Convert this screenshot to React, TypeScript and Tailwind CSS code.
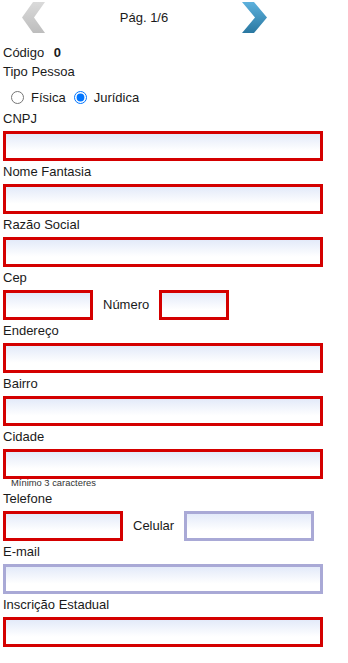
import React from "react";

const RED = "border-[#d40000]";
const LAV = "border-[#a9a9d6]";
const inputBase =
  "block h-[30px] border-[3px] bg-[linear-gradient(to_bottom,#e3eaf9,#ffffff_70%)] outline-none";

function Field({ label, border = RED, last = false }: { label: string; border?: string; last?: boolean }) {
  return (
    <div className={last ? "" : "mb-[3px]"}>
      <div className="h-[15px] leading-[15px] mb-[5px]">{label}</div>
      <input type="text" className={`${inputBase} ${border} w-[320px]`} />
    </div>
  );
}

function LeftArrow() {
  return (
    <svg width="24" height="33" viewBox="0 0 24 33" className="ml-[22px]">
      <defs>
        <linearGradient id="lg" x1="0" y1="0" x2="0" y2="1">
          <stop offset="0" stopColor="#dadada" />
          <stop offset="1" stopColor="#bdbdbd" />
        </linearGradient>
      </defs>
      <polygon points="11,1 23,1 12,16.5 23,32 11,32 0,16.5" fill="url(#lg)" />
    </svg>
  );
}

function RightArrow() {
  return (
    <svg width="26" height="33" viewBox="0 0 26 33">
      <defs>
        <linearGradient id="rg" x1="0" y1="0" x2="0" y2="1">
          <stop offset="0" stopColor="#5db1dd" />
          <stop offset="1" stopColor="#2a78a1" />
        </linearGradient>
      </defs>
      <polygon points="0,1 12,1 25,16.5 12,32 0,32 13,16.5" fill="url(#rg)" />
    </svg>
  );
}

export default function App() {
  return (
    <div
      className="w-[348px] h-[663px] bg-white text-[13px] text-[#1a1a1a] overflow-hidden"
      style={{ fontFamily: '"Liberation Sans", Arial, sans-serif' }}
    >
      {/* paginação */}
      <div className="flex items-center h-[35px]">
        <LeftArrow />
        <span className="w-[196px] text-center">Pág. 1/6</span>
        <RightArrow />
      </div>

      <div className="pl-[3px]">
        <div className="mt-[10px] h-[15px] leading-[15px]">
          Código <span className="ml-[6px] font-bold">0</span>
        </div>
        <div className="mt-[4px] h-[15px] leading-[15px]">Tipo Pessoa</div>

        <div className="mt-[10px] h-[17px] flex items-center">
          <input type="radio" name="tp" className="ml-[8px] w-[13px] h-[13px] m-0" />
          <label className="ml-[7px]">Física</label>
          <input type="radio" name="tp" defaultChecked className="ml-[8px] w-[13px] h-[13px] m-0" />
          <label className="ml-[7px]">Jurídica</label>
        </div>

        <div className="mt-[5px]">
          <Field label="CNPJ" />
          <Field label="Nome Fantasia" />
          <Field label="Razão Social" />

          <div className="mb-[3px]">
            <div className="h-[15px] leading-[15px] mb-[5px]">Cep</div>
            <div className="flex items-center">
              <input type="text" className={`${inputBase} ${RED} w-[90px]`} />
              <span className="mx-[10px]">Número</span>
              <input type="text" className={`${inputBase} ${RED} w-[70px]`} />
            </div>
          </div>

          <Field label="Endereço" />
          <Field label="Bairro" />
          <Field label="Cidade" last />
          <div className="h-[12px] leading-[8px] pl-[8px] text-[9.4px] text-[#333]">Mínimo 3 caracteres</div>

          <div className="mb-[3px]">
            <div className="h-[15px] leading-[15px] mb-[5px]">Telefone</div>
            <div className="flex items-center">
              <input type="text" className={`${inputBase} ${RED} w-[120px]`} />
              <span className="mx-[10px]">Celular</span>
              <input type="text" className={`${inputBase} ${LAV} w-[130px]`} />
            </div>
          </div>

          <Field label="E-mail" border={LAV} />
          <Field label="Inscrição Estadual" />
        </div>
      </div>
    </div>
  );
}
